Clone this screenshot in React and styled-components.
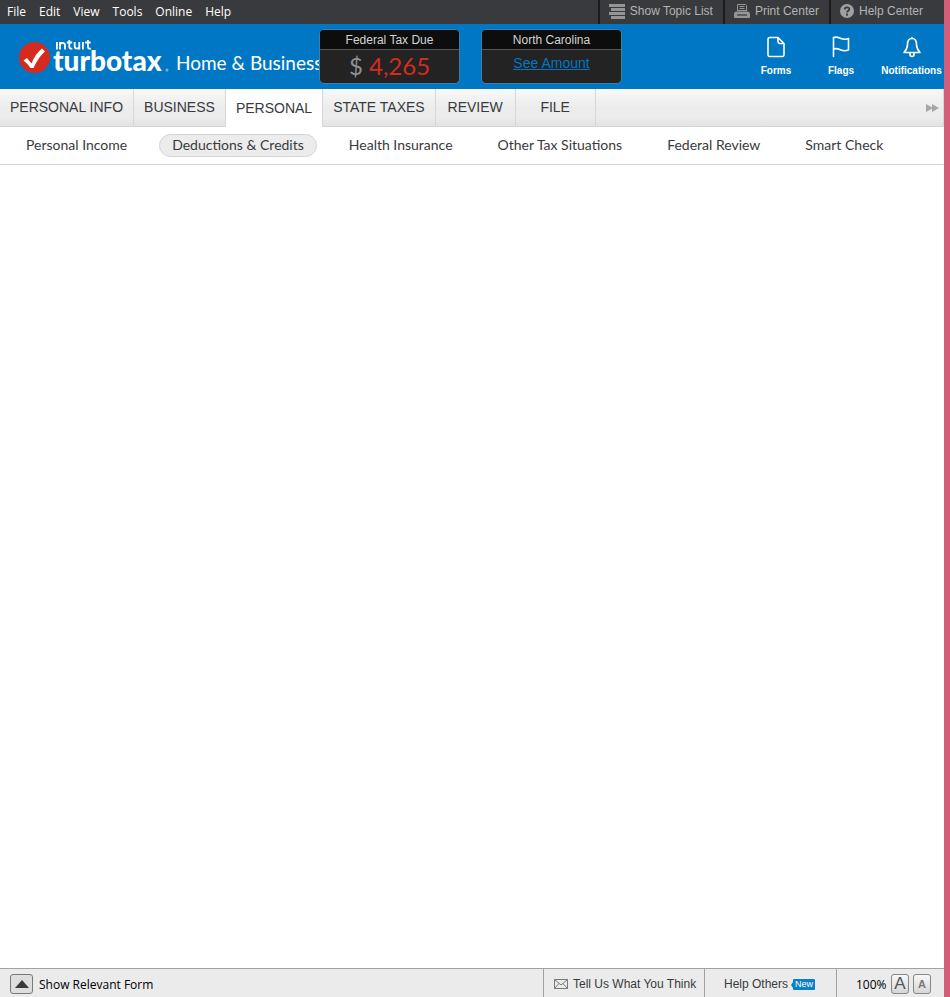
import React from "react";
import styled, { createGlobalStyle } from "styled-components";

const Global = createGlobalStyle`
  * { box-sizing: border-box; }
  html, body, #root { height: 100%; }
  body { margin: 0; font-family: "Liberation Sans", Arial, sans-serif; color: #393a3d; }
  button { font: inherit; color: inherit; background: none; border: 0; padding: 0; margin: 0; cursor: pointer; }
  a { color: inherit; text-decoration: none; }
  svg { display: block; flex: none; }
`;

const Page = styled.div`
  min-height: 100vh;
  display: flex;
  flex-direction: column;
  background: #fff;
  border-right: 6px solid #d45d79;
`;

const MenuBar = styled.div`
  display: flex;
  height: 24px;
  background: #393a3d;
`;
const Menus = styled.nav`
  display: flex;
  gap: 13px;
  padding-left: 7px;
  flex: 1;
`;
const MenuButton = styled.button`
  font-family: "Open Sans", sans-serif;
  font-size: 12px;
  line-height: 24px;
  color: #fff;
`;
const ToolButton = styled.button`
  display: flex;
  align-items: center;
  gap: 5px;
  height: 24px;
  padding: 0 9px 2px;
  padding-right: ${(p) => (p.$last ? "21px" : "10px")};
  border-left: 2px solid #1c1c1e;
  font-size: 12px;
  color: #b4b4b4;
  white-space: nowrap;
`;

const Header = styled.header`
  display: flex;
  height: 65px;
  background: #0077c5;
  color: #fff;
`;
const Brand = styled.div`
  display: flex;
  align-items: flex-start;
  width: 319px;
  padding: 15px 0 0 18px;
  white-space: nowrap;
`;
const Edition = styled.span`
  font-family: Lato, sans-serif;
  font-size: 19px;
  line-height: 24px;
  padding-top: 12px;
  margin-left: 6px;
`;
const Cards = styled.div`
  display: flex;
  gap: 21px;
  padding-top: 5px;
  flex: 1;
`;
const Card = styled.section`
  width: 141px;
  height: 55px;
  border: 1px solid #3f7fa8;
  border-radius: 5px;
  background: #232323;
  overflow: hidden;
  text-align: center;
`;
const CardTitle = styled.h2`
  margin: 0;
  height: 20px;
  font-size: 12px;
  font-weight: 400;
  line-height: 20px;
  color: #d4d4d4;
  background: #0d0d0d;
  border-bottom: 1px solid #555;
`;
const Amount = styled.div`
  font-family: Lato, sans-serif;
  font-size: 24px;
  line-height: 32px;
  color: #d52b1e;
`;
const Currency = styled.span`
  color: #8d9096;
`;
const CardLink = styled.a`
  font-size: 14px;
  line-height: 27px;
  && { color: #0077c5; text-decoration: underline; }
`;
const Actions = styled.div`
  display: flex;
  gap: 8px;
  padding-right: 2px;
`;
const Action = styled.button`
  display: flex;
  flex-direction: column;
  align-items: center;
  justify-content: flex-start;
  gap: 5px;
  width: ${(p) => p.$width};
  padding-top: 12px;
  font-size: 10px;
  font-weight: 700;
  line-height: 13px;
`;

const Tabs = styled.nav`
  display: flex;
  align-items: stretch;
  height: 38px;
  background: linear-gradient(#f8f8f8, #ececec 50%, #ececec 75%, #e2e2e2);
  box-shadow: inset 0 -1px #d4d4d4;
`;
const Tab = styled.button`
  padding: ${(p) => (p.$active ? "0 10px" : "0 10px 2px")};
  min-width: 80px;
  border-right: 1px solid #d4d7dc;
  background: ${(p) => (p.$active ? "#fff" : "transparent")};
  font-size: 14px;
  white-space: nowrap;
`;
const MoreButton = styled.button`
  margin-left: auto;
  padding: 0 4px 0 8px;
  border-right: 1px solid #d4d7dc;
`;

const SubNav = styled.nav`
  display: flex;
  align-items: center;
  gap: 19px;
  height: 38px;
  padding-left: 13px;
  border-bottom: 1px solid #d4d4d4;
`;
const SubLink = styled.a`
  height: 23px;
  padding: 0 12px;
  border: 1px solid ${(p) => (p.$active ? "#d4d4d4" : "transparent")};
  border-radius: 12px;
  background: ${(p) => (p.$active ? "#ececec" : "transparent")};
  font-family: Lato, sans-serif;
  font-size: 14px;
  line-height: 20px;
  white-space: nowrap;
`;

const Main = styled.main`
  flex: 1;
`;

const Footer = styled.footer`
  display: flex;
  height: 29px;
  background: #ebebeb;
  border-top: 1px solid #a0a2a4;
`;
const FormToggle = styled.button`
  display: flex;
  align-items: center;
  gap: 6px;
  margin-right: auto;
  padding: 2px 0 0 10px;
  font-family: "Open Sans", sans-serif;
  font-size: 12px;
  color: #000;
`;
const KeyBox = styled.span`
  display: flex;
  align-items: center;
  justify-content: center;
  width: 23px;
  height: 20px;
  border: 1px solid #77797b;
  border-radius: 3px;
  background: #dedede;
`;
const FooterButton = styled.button`
  display: flex;
  align-items: center;
  gap: 5px;
  width: ${(p) => p.$width};
  padding-top: 2px;
  padding-left: ${(p) => p.$inset};
  border-left: 1px solid #a0a2a4;
  font-size: 12px;
  white-space: nowrap;
`;
const NewTag = styled.span`
  position: relative;
  width: 22px;
  height: 11px;
  border-radius: 1px;
  background: #0a80c8;
  color: #fff;
  font-size: 9px;
  line-height: 11px;
  text-align: center;
  &::before {
    content: "";
    position: absolute;
    left: -2px;
    top: 3px;
    border: solid transparent;
    border-width: 3px 2px 3px 0;
    border-right-color: #0a80c8;
  }
`;
const Zoom = styled.div`
  display: flex;
  align-items: center;
  width: 108px;
  padding: 2px 0 0 19px;
  border-left: 1px solid #a0a2a4;
  font-family: "Open Sans", sans-serif;
  font-size: 12px;
  color: #000;
`;
const Percent = styled.span`
  width: 35px;
`;
const SizeButton = styled.button`
  width: 18px;
  height: 20px;
  margin-right: 4px;
  border: 1px solid #85878a;
  border-radius: 3px;
  background: linear-gradient(#f8f8f8, #d6d6d6);
  font-family: "Liberation Sans", sans-serif;
  font-size: ${(p) => p.$size};
  font-weight: ${(p) => p.$weight};
  line-height: 18px;
  color: ${(p) => p.$color};
`;

const TopicIcon = () => (
  <svg width="16" height="15" fill="#959595">
    <path d="M0 0h16v3H0zM2 4h14v3H2zM0 8h16v3H0zM2 12h14v3H2z" />
  </svg>
);
const PrintIcon = () => (
  <svg width="16" height="16" fill="none">
    <path d="M3.500 8V1.500h8l1 1V8" stroke="#959595" />
    <path d="M5.500 3.500h5M5.500 5.500h5M4 7.500h8" stroke="#959595" />
    <path d="M2 8.500h12q2 .5 2 2.500v3q0 1-1 1H1q-1 0-1-1v-3q0-2 2-2.500z" fill="#959595" />
    <path d="M3 12h10" stroke="#393a3d" strokeWidth="1.200" />
  </svg>
);
const HelpIcon = () => (
  <svg width="14" height="14" viewBox="0 0 14 14">
    <circle cx="7" cy="7" r="7" fill="#a0a0a0" />
    <path d="M4.800 5.500C4.800 2.700 9.300 2.800 9.300 5.200C9.300 6.900 7.100 6.800 7.100 8.600" fill="none" stroke="#393a3d" strokeWidth="1.800" />
    <rect x="6" y="9.600" width="2" height="2" fill="#393a3d" />
  </svg>
);

const Logo = () => (
  <svg width="152" height="38" viewBox="0 0 152 38" role="img" aria-label="Intuit TurboTax">
    <circle cx="16.500" cy="18.500" r="15.500" fill="#d52b1e" />
    <path d="M5.500 21.500L9 19l4.500 5.500Q17.500 14.500 24 9.500l3 3Q20.500 18 15.500 29h-3Q9.500 24.500 5.500 21.500z" fill="#fff" />
    <g fill="none" stroke="#fff" strokeWidth="1.800">
      <path d="M38.900 3v7.500M42 10.500V3M42 6.500Q42 3.800 44.500 3.800T47 6.500V10.500M51.300 1v7q0 2 3 1.600M48.800 3.500h5.400M56.700 3v4q0 2.700 2.300 2.700T61.300 7V3M61.300 3v7.500M64.900 3v7.500M69.900 1v7q0 2 3 1.600M67 3.500h5.600" />
    </g>
    <text x="35" y="32" fill="#fff" fontFamily="Lato, sans-serif" fontWeight="900" fontSize="28">turbotax</text>
    <circle cx="149" cy="31" r="1.500" fill="#73b3dd" />
  </svg>
);

const iconProps = { fill: "none", stroke: "#fff", strokeWidth: 1.6, strokeLinejoin: "round", strokeLinecap: "round" };
const FormsIcon = () => (
  <svg width="22" height="23" {...iconProps}>
    <path d="M5 1.500h8l6 6v11q0 2-2 2H5q-2 0-2-2v-15q0-2 2-2zM13 1.500v4q0 2 2 2h4" />
  </svg>
);
const FlagsIcon = () => (
  <svg width="22" height="23" {...iconProps}>
    <path d="M3.500 20.500V1.500c3-1 5 0 7.500 1s5 1 7.500 0v11.500c-3 1-5 1-7.500 0s-5-2-7.500-1" />
  </svg>
);
const BellIcon = () => (
  <svg width="22" height="23" {...iconProps}>
    <path d="M11 2.500C7.500 2.500 6.500 5.500 6.500 8.500c0 4-1.500 6-3.500 8h16c-2-2-3.500-4-3.500-8 0-3-1-6-4.500-6zM11 2.500v-1M9 17v1.500q0 2 2 2t2-2V17" />
  </svg>
);

const menus = ["File", "Edit", "View", "Tools", "Online", "Help"];
const tabs = ["PERSONAL INFO", "BUSINESS", "PERSONAL", "STATE TAXES", "REVIEW", "FILE"];
const sections = ["Personal Income", "Deductions & Credits", "Health Insurance", "Other Tax Situations", "Federal Review", "Smart Check"];

export default function App() {
  return (
    <>
      <Global />
      <Page>
        <MenuBar>
          <Menus>{menus.map((m) => <MenuButton key={m}>{m}</MenuButton>)}</Menus>
          <ToolButton><TopicIcon />Show Topic List</ToolButton>
          <ToolButton><PrintIcon />Print Center</ToolButton>
          <ToolButton $last><HelpIcon />Help Center</ToolButton>
        </MenuBar>
        <Header>
          <Brand>
            <Logo />
            <Edition>Home &amp; Business</Edition>
          </Brand>
          <Cards>
            <Card>
              <CardTitle>Federal Tax Due</CardTitle>
              <Amount><Currency>$</Currency> 4,265</Amount>
            </Card>
            <Card>
              <CardTitle>North Carolina</CardTitle>
              <CardLink href="#amount">See Amount</CardLink>
            </Card>
          </Cards>
          <Actions>
            <Action $width="50px"><FormsIcon />Forms</Action>
            <Action $width="64px"><FlagsIcon />Flags</Action>
            <Action $width="61px"><BellIcon />Notifications</Action>
          </Actions>
        </Header>
        <Tabs>
          {tabs.map((t) => (
            <Tab key={t} $active={t === "PERSONAL"}>{t}</Tab>
          ))}
          <MoreButton aria-label="More tabs">
            <svg width="13" height="8" fill="#a6a6a6"><path d="M0 0l7 4-7 4zM6 0l7 4-7 4z" /></svg>
          </MoreButton>
        </Tabs>
        <SubNav>
          {sections.map((s) => (
            <SubLink key={s} href="#section" $active={s === "Deductions & Credits"}>{s}</SubLink>
          ))}
        </SubNav>
        <Main />
        <Footer>
          <FormToggle>
            <KeyBox><svg width="14" height="8" fill="#393a3d"><path d="M7 0l7 8H0z" /></svg></KeyBox>
            Show Relevant Form
          </FormToggle>
          <FooterButton $width="161px" $inset="10px">
            <svg width="14" height="10" fill="none" stroke="#77797b">
              <path d="M.5.5h13v9H.5zM.5.5L7 6l6.500-5.500M.5 9.500l4.500-5M13.500 9.500L9 4.500" />
            </svg>
            Tell Us What You Think
          </FooterButton>
          <FooterButton $width="132px" $inset="19px">Help Others<NewTag>New</NewTag></FooterButton>
          <Zoom>
            <Percent>100%</Percent>
            <SizeButton $size="17px" $weight="400" $color="#55575a" aria-label="Larger text">A</SizeButton>
            <SizeButton $size="11px" $weight="700" $color="#77797b" aria-label="Smaller text">A</SizeButton>
          </Zoom>
        </Footer>
      </Page>
    </>
  );
}
